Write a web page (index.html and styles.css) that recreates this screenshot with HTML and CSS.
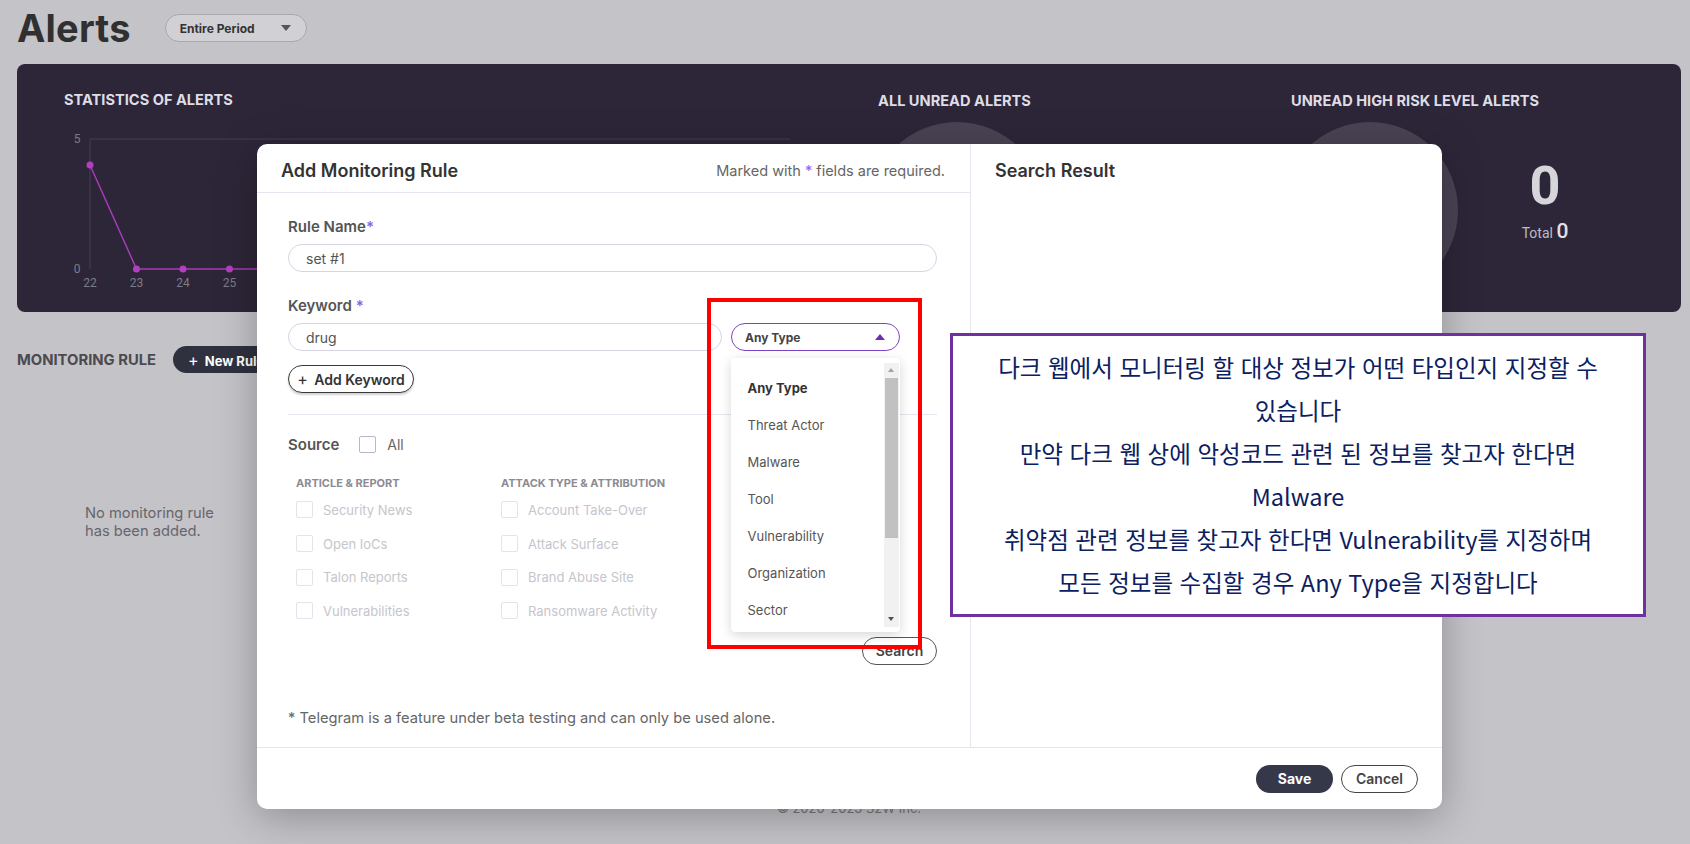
FILE: index.html
```html
<!DOCTYPE html>
<html lang="ko">
<head>
<meta charset="utf-8">
<title>Alerts</title>
<link rel="stylesheet" href="styles.css">
</head>
<body>
<div class="page">
  <header class="page-head">
    <h1 class="page-title">Alerts</h1>
    <div class="period">
      <span>Entire Period</span>
      <span class="period-caret"></span>
    </div>
  </header>

  <section class="stats-card">
    <div class="stat-chart">
      <h2 class="card-title">STATISTICS OF ALERTS</h2>
      <svg class="chart" width="726" height="170" viewBox="0 0 726 170">
        <line x1="26" y1="13" x2="726" y2="13" stroke="#463e55" stroke-width="1"/>
        <line x1="26" y1="13" x2="26" y2="143" stroke="#463e55" stroke-width="1"/>
        <text x="13" y="17" class="axis-label">5</text>
        <text x="13" y="147" class="axis-label">0</text>
        <polyline fill="none" stroke="#a53cb5" stroke-width="1.5" points="26,39 72.5,143 119,143 165.5,143 212,143 258.5,143 305,143 351.5,143 398,143 444.5,143 491,143 537.5,143 584,143 630.5,143 677,143 723.5,143"/>
        <circle cx="26" cy="39" r="3.5" fill="#b23ec2"/>
        <circle cx="72.5" cy="143" r="3.5" fill="#b23ec2"/>
        <circle cx="119" cy="143" r="3.5" fill="#b23ec2"/>
        <circle cx="165.5" cy="143" r="3.5" fill="#b23ec2"/>
        <circle cx="212" cy="143" r="3.5" fill="#b23ec2"/>
        <text x="26" y="161" class="axis-label">22</text>
        <text x="72.5" y="161" class="axis-label">23</text>
        <text x="119" y="161" class="axis-label">24</text>
        <text x="165.5" y="161" class="axis-label">25</text>
        <text x="212" y="161" class="axis-label">26</text>
      </svg>
    </div>
    <div class="stat">
      <h2 class="card-title stat-title">ALL UNREAD ALERTS</h2>
      <div class="stat-row">
        <div class="stat-circle"></div>
        <div class="stat-num">
          <div class="stat-big">0</div>
          <div class="stat-total">Total <b>0</b></div>
        </div>
      </div>
    </div>
    <div class="stat">
      <h2 class="card-title stat-title">UNREAD HIGH RISK LEVEL ALERTS</h2>
      <div class="stat-row">
        <div class="stat-circle"></div>
        <div class="stat-num">
          <div class="stat-big">0</div>
          <div class="stat-total">Total <b>0</b></div>
        </div>
      </div>
    </div>
  </section>

  <section class="rules">
    <div class="rules-head">
      <h2 class="rules-title">MONITORING RULE</h2>
      <button class="btn-new"><span class="plus">+</span> New Rule</button>
    </div>
    <p class="rules-empty">No monitoring rule<br>has been added.</p>
  </section>

  <footer class="copyright">© 2020-2023 S2W Inc.</footer>
</div>

<div class="modal">
  <div class="modal-body">
    <div class="modal-form">
      <div class="modal-head">
        <h3 class="modal-title">Add Monitoring Rule</h3>
        <span class="modal-req">Marked with <em>*</em> fields are required.</span>
      </div>
      <div class="form">
        <div class="field-label">Rule Name<em>*</em></div>
        <div class="input">set #1</div>

        <div class="field-label field-label--kw">Keyword <em>*</em></div>
        <div class="kw-row">
          <div class="input input--kw">drug</div>
          <div class="select">
            <span class="select-text">Any Type</span>
            <span class="select-caret"></span>
            <div class="menu">
              <ul class="menu-list">
                <li class="menu-item menu-item--active">Any Type</li>
                <li class="menu-item">Threat Actor</li>
                <li class="menu-item">Malware</li>
                <li class="menu-item">Tool</li>
                <li class="menu-item">Vulnerability</li>
                <li class="menu-item">Organization</li>
                <li class="menu-item">Sector</li>
              </ul>
              <div class="scrollbar">
                <span class="sb-up"></span>
                <span class="sb-thumb"></span>
                <span class="sb-down"></span>
              </div>
            </div>
          </div>
        </div>

        <button class="btn-outline btn-add"><span class="plus">+</span> Add Keyword</button>

        <div class="divider"></div>

        <div class="source-row">
          <span class="source-label">Source</span>
          <span class="checkbox checkbox--active"></span>
          <span class="source-all">All</span>
        </div>

        <div class="source-grid">
          <div class="source-col">
            <div class="source-head">ARTICLE &amp; REPORT</div>
            <div class="source-item"><span class="checkbox"></span>Security News</div>
            <div class="source-item"><span class="checkbox"></span>Open IoCs</div>
            <div class="source-item"><span class="checkbox"></span>Talon Reports</div>
            <div class="source-item"><span class="checkbox"></span>Vulnerabilities</div>
          </div>
          <div class="source-col">
            <div class="source-head">ATTACK TYPE &amp; ATTRIBUTION</div>
            <div class="source-item"><span class="checkbox"></span>Account Take-Over</div>
            <div class="source-item"><span class="checkbox"></span>Attack Surface</div>
            <div class="source-item"><span class="checkbox"></span>Brand Abuse Site</div>
            <div class="source-item"><span class="checkbox"></span>Ransomware Activity</div>
          </div>
        </div>

        <div class="search-row">
          <button class="btn-outline btn-search">Search</button>
        </div>

        <p class="tg-note">* Telegram is a feature under beta testing and can only be used alone.</p>
      </div>
    </div>
    <div class="modal-result">
      <div class="modal-head modal-head--plain">
        <h3 class="modal-title">Search Result</h3>
      </div>
    </div>
  </div>
  <div class="modal-foot">
    <button class="btn-save">Save</button>
    <button class="btn-cancel">Cancel</button>
  </div>
</div>

<div class="note-red"></div>
<div class="note-purple">
  <div class="note-line">다크 웹에서 모니터링 할 대상 정보가 어떤 타입인지 지정할 수</div>
  <div class="note-line">있습니다</div>
  <div class="note-line">만약 다크 웹 상에 악성코드 관련 된 정보를 찾고자 한다면</div>
  <div class="note-line">Malware</div>
  <div class="note-line">취약점 관련 정보를 찾고자 한다면 Vulnerability를 지정하며</div>
  <div class="note-line">모든 정보를 수집할 경우 Any Type을 지정합니다</div>
</div>
</body>
</html>
```

FILE: styles.css
```css
html, body {
  margin: 0;
  padding: 0;
}

body {
  width: 1690px;
  height: 844px;
  overflow: hidden;
  position: relative;
  background: #c4c3c8;
  font-family: Inter, "Noto Sans", "Noto Sans CJK KR", sans-serif;
  color: #333;
}

button {
  font-family: inherit;
  cursor: pointer;
}

/* ---------- page ---------- */
.page {
  display: flex;
  flex-direction: column;
  min-height: 844px;
  box-sizing: border-box;
  padding: 14px 9px 28px 17px;
}

.page-head {
  display: flex;
  align-items: center;
  height: 28px;
}

.page-title {
  margin: 0;
  font-size: 38px;
  font-weight: 700;
  line-height: 28px;
  color: #303030;
  letter-spacing: 0.2px;
}

.period {
  margin-left: 34px;
  width: 142px;
  height: 28px;
  box-sizing: border-box;
  border: 1px solid #a9a8ae;
  border-radius: 14px;
  background: #d1d0d5;
  display: flex;
  align-items: center;
  justify-content: space-between;
  padding: 0 15px 0 14px;
  font-size: 12px;
  font-weight: 700;
  color: #333;
}

.period-caret {
  width: 0;
  height: 0;
  border-left: 5px solid transparent;
  border-right: 5px solid transparent;
  border-top: 6px solid #555;
}

/* ---------- stats card ---------- */
.stats-card {
  margin-top: 22px;
  height: 248px;
  box-sizing: border-box;
  background: #2d2639;
  border-radius: 8px;
  display: grid;
  grid-template-columns: 726px 413px 1fr;
  padding: 28px 0 0 47px;
  overflow: hidden;
}

.card-title {
  margin: 0;
  font-family: Inter, Roboto, sans-serif;
  font-size: 14.6px;
  font-weight: 700;
  line-height: 16px;
  color: #dedde5;
  white-space: nowrap;
}

.chart {
  display: block;
  margin-top: 18px;
}

.axis-label {
  font-family: Roboto, Inter, sans-serif;
  font-size: 12px;
  fill: #7f7a88;
  text-anchor: middle;
}

.stat-title {
  margin-top: 1px;
  margin-left: 88px;
}

.stat-row {
  display: flex;
  align-items: flex-start;
  margin-top: 13px;
  margin-left: 79px;
}

.stat-circle {
  width: 176px;
  height: 176px;
  border-radius: 50%;
  background: #4a4354;
  flex: none;
}

.stat-num {
  margin-left: 60px;
  margin-top: 34px;
  width: 54px;
  text-align: center;
  font-family: Roboto, Inter, sans-serif;
  color: #d6d5da;
}

.stat-big {
  font-size: 54px;
  font-weight: 700;
  line-height: 60px;
}

.stat-total {
  margin-top: 3px;
  font-size: 14px;
  color: #bdbcc3;
  white-space: nowrap;
}

.stat-total b {
  font-size: 21px;
  font-weight: 500;
  color: #e2e1e6;
}

/* ---------- monitoring rule ---------- */
.rules-head {
  display: flex;
  align-items: center;
  margin-top: 34px;
  height: 27px;
}

.rules-title {
  margin: 0;
  font-family: Inter, Roboto, sans-serif;
  font-size: 14.8px;
  font-weight: 700;
  color: #4a4a50;
}

.btn-new {
  margin-left: 17px;
  height: 27px;
  width: 120px;
  border: 0;
  border-radius: 14px;
  background: #30313f;
  color: #fff;
  font-size: 13px;
  font-weight: 700;
  text-align: left;
  padding-left: 15px;
}

.plus {
  font-weight: 400;
  font-size: 16px;
  margin-right: 3px;
}

.rules-empty {
  margin: 131px 0 0 68px;
  font-family: Inter, Roboto, sans-serif;
  font-size: 14.7px;
  line-height: 18px;
  color: #66666c;
}

.copyright {
  margin-top: auto;
  text-align: center;
  font-size: 13px;
  line-height: 16px;
  color: #77767d;
}

/* ---------- modal ---------- */
.modal {
  position: absolute;
  left: 257px;
  top: 144px;
  width: 1185px;
  height: 665px;
  background: #fff;
  border-radius: 10px;
  box-shadow: 0 8px 40px rgba(0, 0, 0, 0.28);
  display: flex;
  flex-direction: column;
}

.modal-body {
  flex: 1;
  display: grid;
  grid-template-columns: 714px 1fr;
  min-height: 0;
}

.modal-form {
  border-right: 1px solid #e6e4ee;
}

.modal-head {
  height: 49px;
  box-sizing: border-box;
  border-bottom: 1px solid #e6e4ee;
  display: flex;
  align-items: center;
  justify-content: space-between;
  padding: 4px 25px 0 24px;
}

.modal-head--plain {
  border-bottom: 0;
}

.modal-title {
  margin: 0;
  font-size: 18px;
  font-weight: 600;
  color: #333;
}

.modal-req {
  font-size: 14.5px;
  color: #666;
}

.modal-req em,
.field-label em {
  font-style: normal;
  color: #8c63e8;
}

.form {
  padding: 0 33px 0 31px;
}

.field-label {
  margin-top: 24px;
  font-size: 15px;
  font-weight: 600;
  line-height: 20px;
  color: #555;
}

.field-label--kw {
  margin-top: 24px;
}

.input {
  margin-top: 7px;
  height: 28px;
  box-sizing: border-box;
  border: 1px solid #d7d5e4;
  border-radius: 14px;
  padding-left: 17px;
  display: flex;
  align-items: center;
  font-size: 14px;
  color: #555;
}

.kw-row {
  display: flex;
  gap: 9px;
  margin-top: 7px;
  padding-right: 37px;
}

.input--kw {
  margin-top: 0;
  flex: 1;
}

.select {
  position: relative;
  width: 169px;
  height: 28px;
  box-sizing: border-box;
  border: 1.5px solid #7e44c8;
  border-radius: 14px;
  display: flex;
  align-items: center;
  justify-content: space-between;
  padding: 0 14px 0 13px;
}

.select-text {
  font-size: 12px;
  font-weight: 700;
  color: #444;
}

.select-caret {
  width: 0;
  height: 0;
  border-left: 5px solid transparent;
  border-right: 5px solid transparent;
  border-bottom: 6px solid #6b2fb0;
}

.menu {
  position: absolute;
  left: -1.5px;
  top: 33.5px;
  width: 169px;
  height: 274px;
  background: #fff;
  border-radius: 4px;
  box-shadow: 0 3px 12px rgba(0, 0, 0, 0.16);
  overflow: hidden;
  z-index: 5;
}

.menu-list {
  list-style: none;
  margin: 0;
  padding: 12px 0 0;
}

.menu-item {
  height: 37px;
  line-height: 37px;
  padding-left: 17px;
  font-size: 13px;
  color: #555;
}

.menu-item--active {
  font-weight: 700;
  color: #333;
}

.scrollbar {
  position: absolute;
  right: 1px;
  top: 5px;
  bottom: 5px;
  width: 15px;
  background: #f1f1f1;
}

.sb-up,
.sb-down {
  position: absolute;
  left: 4px;
  width: 0;
  height: 0;
  border-left: 3.5px solid transparent;
  border-right: 3.5px solid transparent;
}

.sb-up {
  top: 5px;
  border-bottom: 4px solid #a3a3a3;
}

.sb-down {
  bottom: 6px;
  border-top: 4px solid #505050;
}

.sb-thumb {
  position: absolute;
  left: 1px;
  right: 1px;
  top: 15px;
  height: 160px;
  background: #c1c1c1;
}

.btn-outline {
  height: 28px;
  box-sizing: border-box;
  border: 1.5px solid #3a3a3a;
  border-radius: 14px;
  background: #fff;
  color: #333;
  font-size: 13.5px;
  font-weight: 600;
  padding: 0;
}

.btn-add {
  display: block;
  margin-top: 14px;
  width: 126px;
  font-size: 14px;
  box-shadow: 0 2px 2px rgba(0, 0, 0, 0.18);
}

.btn-add .plus {
  font-size: 16px;
}

.divider {
  margin-top: 21px;
  height: 1px;
  background: #e6e4ee;
}

.source-row {
  display: flex;
  align-items: center;
  margin-top: 19px;
  height: 20px;
}

.source-label {
  font-size: 15px;
  font-weight: 600;
  color: #555;
  margin-right: 20px;
}

.checkbox {
  width: 17px;
  height: 17px;
  box-sizing: border-box;
  border: 1.5px solid #e4e3ec;
  border-radius: 2px;
  flex: none;
  background: #fff;
}

.checkbox--active {
  border-color: #b8b6c8;
}

.source-all {
  margin-left: 11px;
  font-size: 14px;
  color: #666;
}

.source-grid {
  display: grid;
  grid-template-columns: 205px 205px;
  margin-top: 21px;
  padding-left: 8px;
}

.source-head {
  height: 16px;
  line-height: 16px;
  font-size: 11px;
  font-weight: 700;
  color: #8b8b92;
  white-space: nowrap;
  margin-bottom: 2px;
}

.source-item {
  display: flex;
  align-items: center;
  gap: 10px;
  height: 33.7px;
  font-size: 13px;
  color: #c6c5cc;
  white-space: nowrap;
}

.search-row {
  display: flex;
  justify-content: flex-end;
  margin-top: 9px;
}

.btn-search {
  width: 75px;
  border-color: #555;
  font-size: 14px;
  color: #444;
}

.tg-note {
  margin: 43px 0 0;
  font-size: 14.7px;
  line-height: 20px;
  color: #666;
}

.modal-foot {
  height: 62px;
  box-sizing: border-box;
  border-top: 1px solid #e6e4ee;
  display: flex;
  justify-content: flex-end;
  align-items: center;
  gap: 8px;
  padding: 0 24px 0 0;
}

.btn-save,
.btn-cancel {
  width: 77px;
  height: 28px;
  box-sizing: border-box;
  border-radius: 14px;
  font-size: 14px;
  font-weight: 700;
}

.btn-save {
  border: 0;
  background: #353849;
  color: #fff;
}

.btn-cancel {
  border: 1px solid #444;
  background: #fff;
  color: #444;
  font-weight: 600;
}

/* ---------- annotations ---------- */
.note-red {
  position: absolute;
  left: 707px;
  top: 298px;
  width: 215px;
  height: 351px;
  box-sizing: border-box;
  border: 4px solid #ff0000;
  z-index: 10;
}

.note-purple {
  position: absolute;
  left: 950px;
  top: 333px;
  width: 696px;
  height: 284px;
  box-sizing: border-box;
  border: 3px solid #7030a0;
  background: #fff;
  padding: 10px 6px 0;
  text-align: center;
  font-family: "Noto Sans CJK KR", "Noto Sans", sans-serif;
  font-size: 23.5px;
  line-height: 43px;
  color: #0b2060;
  z-index: 10;
}

.note-line {
  white-space: nowrap;
}
```
